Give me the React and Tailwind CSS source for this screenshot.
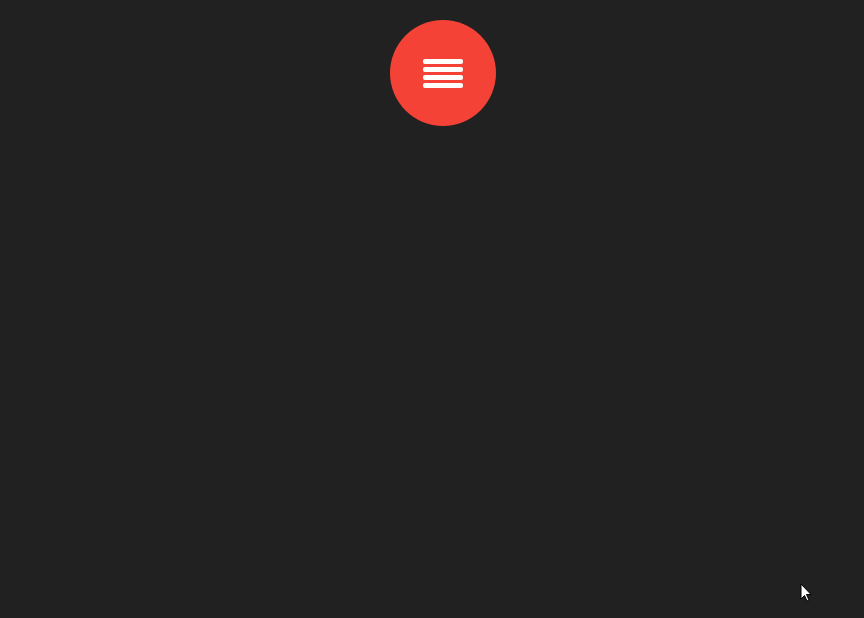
export default function App() {
  return (
    <div className="relative min-h-screen h-[618px] bg-[#212121] overflow-hidden">
      <div className="flex justify-center pt-5 pl-[22px]">
        <button className="w-[106px] h-[106px] rounded-full bg-[#f44336] flex flex-col items-center justify-center gap-[3px]">
          <span className="block w-10 h-[5px] rounded-[2px] bg-white" />
          <span className="block w-10 h-[5px] rounded-[2px] bg-white" />
          <span className="block w-10 h-[5px] rounded-[2px] bg-white" />
          <span className="block w-10 h-[5px] rounded-[2px] bg-white" />
        </button>
      </div>

      {/* mouse pointer */}
      <svg className="absolute left-[800px] top-[583px]" width="13" height="20" viewBox="0 0 13 20">
        <path d="M1 1 L1 16 L4.5 12.5 L7 18 L9 17 L6.5 11.5 L11 11.5 Z" fill="#fff" stroke="#000" strokeWidth="1" />
      </svg>
    </div>
  )
}
